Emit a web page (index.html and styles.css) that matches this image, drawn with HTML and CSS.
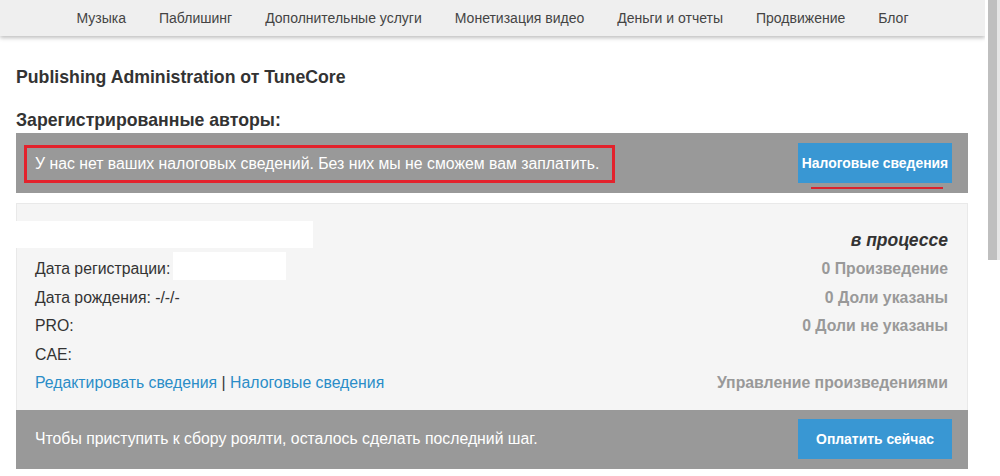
FILE: index.html
```html
<!DOCTYPE html>
<html lang="ru">
<head>
    <meta charset="UTF-8">
    <title>Publishing Administration</title>
    <link rel="stylesheet" href="styles.css">
</head>
<body>
<div class="page">
    <div class="main">
        <ul class="nav">
            <li>Музыка</li>
            <li>Паблишинг</li>
            <li>Дополнительные услуги</li>
            <li>Монетизация видео</li>
            <li>Деньги и отчеты</li>
            <li>Продвижение</li>
            <li>Блог</li>
        </ul>

        <div class="content">
            <h1 class="title">Publishing Administration от TuneCore</h1>
            <h2 class="subtitle">Зарегистрированные авторы:</h2>

            <div class="bar bar-top">
                <div class="notice">У нас нет ваших налоговых сведений. Без них мы не сможем вам заплатить.</div>
                <a class="btn btn-marked" href="#">Налоговые сведения</a>
            </div>

            <div class="card">
                <div class="card-head">
                    <span class="hidden-name"></span>
                    <span class="status">в процессе</span>
                </div>
                <div class="card-body">
                    <ul class="info">
                        <li>Дата регистрации:<span class="hidden-date"></span></li>
                        <li>Дата рождения: -/-/-</li>
                        <li>PRO:</li>
                        <li>CAE:</li>
                        <li><a href="#">Редактировать сведения</a> | <a href="#">Налоговые сведения</a></li>
                    </ul>
                    <ul class="stats">
                        <li>0 Произведение</li>
                        <li>0 Доли указаны</li>
                        <li>0 Доли не указаны</li>
                        <li>&nbsp;</li>
                        <li>Управление произведениями</li>
                    </ul>
                </div>
            </div>

            <div class="bar bar-bottom">
                <div class="bar-text">Чтобы приступить к сбору роялти, осталось сделать последний шаг.</div>
                <a class="btn" href="#">Оплатить сейчас</a>
            </div>
        </div>
    </div>
    <div class="scrollbar"><div class="thumb"></div></div>
</div>
</body>
</html>
```

FILE: styles.css
```css
*{
    margin: 0;
    padding: 0;
    box-sizing: border-box;
}
ul{
    list-style: none;
}
a{
    text-decoration: none;
}
html,body{
    height: 100%;
    overflow: hidden;
}
body{
    font-family: "Liberation Sans", Arial, sans-serif;
    color: #333;
    background: #fff;
}
.page{
    display: flex;
    height: 476px;
}
.main{
    width: 985px;
}
.scrollbar{
    width: 15px;
    padding-left: 3px;
    background: #fff;
}
.thumb{
    width: 12px;
    height: 260px;
    background: #bfbfbf;
    border-right: 3px solid #e6e6e6;
}

/* верхнее меню */
.nav{
    display: flex;
    justify-content: center;
    gap: 33px;
    height: 36px;
    align-items: center;
    background: #efefef;
    box-shadow: 0 2px 4px rgba(0,0,0,0.25);
    font-size: 14px;
    color: #444;
}

.content{
    padding: 0 17px 0 16px;
}
.title{
    font-size: 17.7px;
    font-weight: bold;
    color: #333;
    margin-top: 31px;
    line-height: 20px;
}
.subtitle{
    font-size: 17.7px;
    font-weight: bold;
    color: #333;
    margin-top: 23px;
    line-height: 20px;
}

/* серые полосы */
.bar{
    display: flex;
    align-items: center;
    justify-content: space-between;
    background: #999;
    color: #fff;
    font-size: 15.8px;
}
.bar-top{
    margin-top: 3px;
    height: 60px;
    padding: 0 16px 0 8px;
}
.notice{
    border: 3px solid #e3222c;
    height: 38px;
    line-height: 32px;
    padding: 0 13px 0 8px;
    margin-top: 2px;
}
.bar-bottom{
    height: 59px;
    padding: 0 16px 0 19px;
}
.btn{
    display: block;
    width: 154px;
    height: 40px;
    line-height: 40px;
    text-align: center;
    background: #3997d3;
    color: #fff;
    font-size: 13.9px;
    font-weight: bold;
}
.btn-marked{
    position: relative;
}
.btn-marked:after{
    content: "";
    position: absolute;
    left: 13px;
    right: 9px;
    bottom: -6px;
    height: 2px;
    background: #d9232d;
}

/* карточка автора */
.card{
    margin-top: 10px;
    background: #f5f5f5;
    border: 1px solid #e9e9e9;
    border-bottom: none;
    padding: 0 19px 12px 18px;
}
.card-head{
    position: relative;
    height: 47px;
    display: flex;
    align-items: flex-end;
    justify-content: flex-end;
}
.hidden-name{
    position: absolute;
    left: -34px;
    top: 17px;
    width: 312px;
    height: 27px;
    background: #fff;
}
.status{
    font-size: 17.5px;
    font-weight: bold;
    font-style: italic;
    color: #333;
    line-height: 22px;
}
.card-body{
    display: flex;
    justify-content: space-between;
    padding-top: 4px;
    font-size: 15.8px;
}
.info li,
.stats li{
    height: 28.5px;
    line-height: 28.5px;
}
.stats{
    text-align: right;
    font-weight: bold;
    color: #999;
}
.info a{
    color: #2a8dc8;
}
.hidden-date{
    display: inline-block;
    width: 113px;
    height: 28px;
    background: #fff;
    vertical-align: top;
    position: relative;
    top: -3px;
    margin-left: 3px;
}
```
